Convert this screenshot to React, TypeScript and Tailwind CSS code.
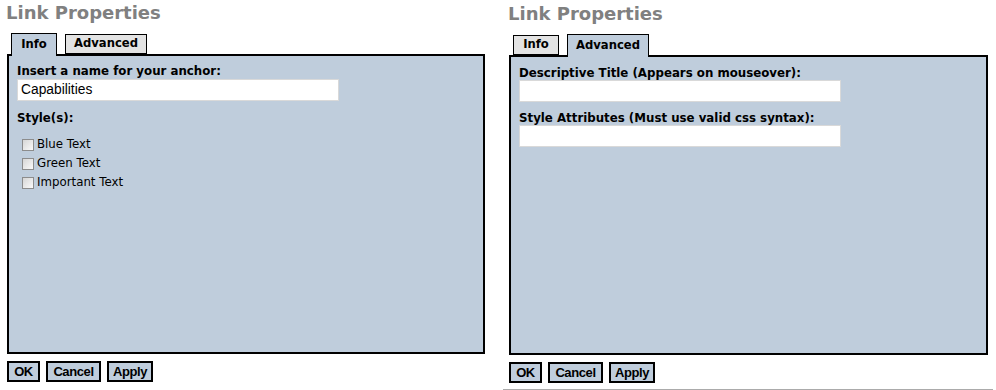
const verdana = "font-['DejaVu_Sans',Verdana,sans-serif]";
const arial = "font-['Liberation_Sans',Arial,sans-serif]";

function Tabs({ active }: { active: "info" | "advanced" }) {
  const tab = (name: string, key: "info" | "advanced", width: string) => {
    const isActive = key === active;
    return (
      <div
        className={`${width} ${verdana} flex items-center justify-center text-[11.6px] font-bold text-black border-black ${
          isActive
            ? "h-[23px] -mb-[2px] border-x border-t bg-[#bfcddc] relative z-10 pb-[1px]"
            : "h-[20px] border bg-[#e3e3e3]"
        }`}
      >
        {name}
      </div>
    );
  };
  return (
    <div className="flex items-end gap-[8px] ml-[4px]">
      {tab("Info", "info", "w-[46px]")}
      {tab("Advanced", "advanced", "w-[82px]")}
    </div>
  );
}

function Label({ children }: { children: React.ReactNode }) {
  return (
    <div className={`${verdana} text-[11.8px] font-bold leading-[14px] text-black`}>
      {children}
    </div>
  );
}

function TextBox({ value }: { value?: string }) {
  return (
    <div
      className={`${arial} w-[322px] h-[22px] bg-white border border-[#d9d9d9] flex items-center px-[3px] text-[13.8px] text-black`}
    >
      {value}
    </div>
  );
}

function Checkbox({ label }: { label: string }) {
  return (
    <div className="flex items-center h-[19px] pl-[5px]">
      <div className="w-[12px] h-[12px] border border-[#8c8c8c] bg-gradient-to-br from-[#d6d6d6] to-[#fafafa]" />
      <span className={`${verdana} text-[11.8px] text-black ml-[3px]`}>{label}</span>
    </div>
  );
}

function Buttons() {
  return (
    <div className="flex gap-[6px] mt-[7px]">
      {[
        ["OK", "w-[33px]"],
        ["Cancel", "w-[55px]"],
        ["Apply", "w-[46px]"],
      ].map(([t, w]) => (
        <div
          key={t}
          className={`${w} ${arial} h-[21px] border-2 border-black bg-[#bfcddc] flex items-center justify-center text-[13px] font-bold tracking-[-0.4px] text-black`}
        >
          {t}
        </div>
      ))}
    </div>
  );
}

function Title() {
  return (
    <div className={`${verdana} h-[24px] pt-[2px] text-[18px] leading-[22px] font-bold text-[#808080]`}>
      Link Properties
    </div>
  );
}

export default function App() {
  return (
    <div className="w-[996px] h-[390px] bg-white flex overflow-hidden">
      <div className="w-[503px] shrink-0">
        <div className="pl-[6px]">
          <Title />
        </div>
        <div className="ml-[7px] mt-[9px]">
          <Tabs active="info" />
          <div className="w-[478px] h-[300px] border-2 border-black bg-[#bfcddc] pl-[8px] pt-[8px]">
            <Label>Insert a name for your anchor:</Label>
            <div className="mt-[1px]">
              <TextBox value="Capabilities" />
            </div>
            <div className="mt-[10px]">
              <Label>Style(s):</Label>
            </div>
            <div className="mt-[10px]">
              <Checkbox label="Blue Text" />
              <Checkbox label="Green Text" />
              <Checkbox label="Important Text" />
            </div>
          </div>
          <Buttons />
        </div>
      </div>

      <div className="w-[490px] shrink-0 pt-[1px] self-start border-b-2 border-[#ababab] pb-[6px]">
        <div className="pl-[5px]">
          <Title />
        </div>
        <div className="ml-[6px] mt-[9px]">
          <Tabs active="advanced" />
          <div className="w-[479px] h-[300px] border-2 border-black bg-[#bfcddc] pl-[8px] pt-[9px]">
            <Label>Descriptive Title (Appears on mouseover):</Label>
            <TextBox />
            <div className="mt-[9px]">
              <Label>Style Attributes (Must use valid css syntax):</Label>
            </div>
            <TextBox />
          </div>
          <Buttons />
        </div>
      </div>
    </div>
  );
}
